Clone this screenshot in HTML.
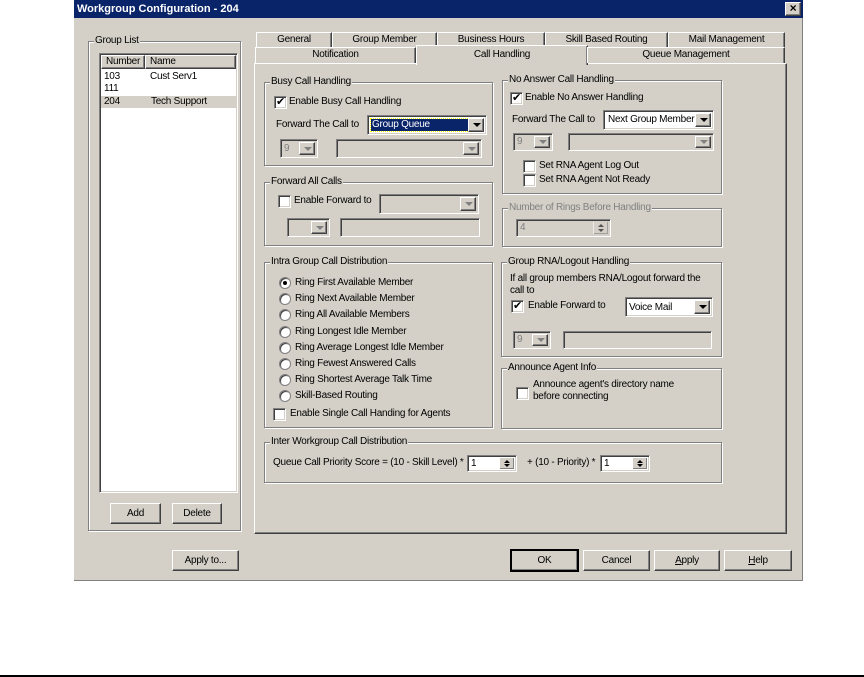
<!DOCTYPE html>
<html><head><meta charset="utf-8"><style>
*{box-sizing:border-box;margin:0;padding:0}
body{width:864px;height:677px;background:#fff;position:relative;overflow:hidden;font-family:"Liberation Sans",sans-serif;font-size:10px;letter-spacing:-0.25px;color:#000}
div,span{position:absolute}
.dlg{left:74px;top:0;width:729px;height:581px;background:#d4d0c8;border-right:1px solid #808080;border-bottom:1px solid #808080}
.title{left:74px;top:0;width:729px;height:18px;background:#0a246a;color:#fff;font-weight:bold;font-size:11px;letter-spacing:0;line-height:18px;padding-left:3px}
.fs{border:1px solid #808080;box-shadow:inset 1px 1px #fff,1px 1px #fff}
.lg{background:#d4d0c8;top:-7px;left:5px;padding:0 1px;white-space:nowrap;line-height:12px}
.t{white-space:nowrap;line-height:12px}
.sunk{background:#fff;border-top:1px solid #808080;border-left:1px solid #808080;border-bottom:1px solid #fff;border-right:1px solid #fff;box-shadow:inset 1px 1px #404040,inset -1px -1px #d4d0c8}
.dis{background:#d4d0c8}
.btn{background:#d4d0c8;border-top:1px solid #fff;border-left:1px solid #fff;border-right:1px solid #404040;border-bottom:1px solid #404040;box-shadow:inset -1px -1px #808080;text-align:center;white-space:nowrap}
.cb{width:13px;height:13px}
.rd{width:12px;height:12px;border-radius:50%;background:#fff;border:1px solid #808080;box-shadow:inset 1px 1px #404040}
.rd.on::after{content:"";position:absolute;left:3px;top:3px;width:4px;height:4px;border-radius:50%;background:#000}
.arr{right:2px;top:2px;bottom:2px;width:16px}
.arr::after{content:"";position:absolute;left:4px;top:50%;margin-top:-2px;border-left:4px solid transparent;border-right:4px solid transparent;border-top:4px solid #000}
.arr.g::after{border-top-color:#808080}
.gray{color:#808080}
.tab{background:#d4d0c8;border-top:1px solid #fff;border-left:1px solid #fff;border-right:1px solid #404040;box-shadow:inset -1px 0 #808080;text-align:center;line-height:14px;white-space:nowrap}
.chk::after{content:"✔";position:absolute;left:1px;top:-1px;font-size:11px;line-height:13px}
.spin{right:2px;top:2px;bottom:2px;width:15px;border-left:1px solid #fff;background:#d4d0c8;box-shadow:inset -1px -1px #808080}
.spin::before{content:"";position:absolute;left:4px;top:2px;border-left:3px solid transparent;border-right:3px solid transparent;border-bottom:3px solid #000}
.spin::after{content:"";position:absolute;left:4px;bottom:2px;border-left:3px solid transparent;border-right:3px solid transparent;border-top:3px solid #000}
</style></head><body>
<div class="dlg"></div>
<div class="title">Workgroup Configuration - 204</div>
<div class="btn" style="left:785px;top:2px;width:16px;height:14px;line-height:11px;font-weight:bold;font-size:12px">×</div>

<div class="fs" style="left:88px;top:41px;width:153px;height:490px"><span class="lg">Group List</span></div>
<div class="sunk" style="left:99px;top:53px;width:139px;height:440px"></div>
<div class="btn" style="left:101px;top:55px;width:44px;height:14px;line-height:12px;text-align:left;padding-left:4px">Number</div>
<div class="btn" style="left:145px;top:55px;width:91px;height:14px;line-height:12px;text-align:left;padding-left:4px">Name</div>
<div style="left:101px;top:96px;width:135px;height:12px;background:#d4d0c8"></div>
<span class="t" style="left:104px;top:71px">103</span><span class="t" style="left:150px;top:71px">Cust Serv1</span>
<span class="t" style="left:104px;top:83px">111</span>
<span class="t" style="left:104px;top:96px">204</span><span class="t" style="left:151px;top:96px">Tech Support</span>
<div class="btn" style="left:110px;top:503px;width:51px;height:21px;line-height:19px">Add</div>
<div class="btn" style="left:172px;top:503px;width:50px;height:21px;line-height:19px">Delete</div>

<div class="tab" style="left:256px;top:32px;width:76px;height:16px">General</div>
<div class="tab" style="left:332px;top:32px;width:105px;height:16px">Group Member</div>
<div class="tab" style="left:437px;top:32px;width:108px;height:16px">Business Hours</div>
<div class="tab" style="left:545px;top:32px;width:123px;height:16px">Skill Based Routing</div>
<div class="tab" style="left:668px;top:32px;width:117px;height:16px">Mail Management</div>
<div style="left:254px;top:63px;width:533px;height:471px;border-top:1px solid #fff;border-left:1px solid #fff;border-right:1px solid #404040;border-bottom:1px solid #404040;box-shadow:inset -1px -1px #808080;background:#d4d0c8"></div>
<div class="tab" style="left:255px;top:47px;width:161px;height:16px">Notification</div>
<div class="tab" style="left:416px;top:45px;width:172px;height:20px;border-bottom:none;line-height:18px">Call Handling</div>
<div class="tab" style="left:587px;top:47px;width:198px;height:16px">Queue Management</div>

<div class="fs" style="left:264px;top:82px;width:229px;height:84px"><span class="lg">Busy Call Handling</span></div>
<div class="sunk cb chk" style="left:274px;top:96px"></div><span class="t" style="left:289px;top:96px">Enable Busy Call Handling</span>
<span class="t" style="left:276px;top:119px">Forward The Call to</span>
<div class="sunk" style="left:367px;top:115px;width:120px;height:20px"><div style="left:3px;top:3px;width:100px;height:12px;background:#0a246a;outline:1px dotted #ff0"></div><span class="t" style="left:4px;top:3px;color:#fff">Group Queue</span><div class="btn arr"></div></div>
<div class="sunk dis" style="left:280px;top:139px;width:38px;height:19px"><span class="t gray" style="left:3px;top:3px">9</span><div class="btn arr g"></div></div>
<div class="sunk dis" style="left:336px;top:139px;width:146px;height:19px"><div class="btn arr g"></div></div>

<div class="fs" style="left:264px;top:182px;width:229px;height:64px"><span class="lg">Forward All Calls</span></div>
<div class="sunk cb" style="left:278px;top:195px"></div><span class="t" style="left:294px;top:195px">Enable Forward to</span>
<div class="sunk dis" style="left:379px;top:194px;width:100px;height:20px"><div class="btn arr g"></div></div>
<div class="sunk dis" style="left:287px;top:218px;width:43px;height:19px"><div class="btn arr g"></div></div>
<div class="sunk dis" style="left:340px;top:218px;width:140px;height:19px"></div>

<div class="fs" style="left:264px;top:262px;width:229px;height:166px"><span class="lg">Intra Group Call Distribution</span></div>
<div class="rd on" style="left:279px;top:277px"></div><span class="t" style="left:295px;top:277px">Ring First Available Member</span>
<div class="rd" style="left:279px;top:293px"></div><span class="t" style="left:295px;top:293px">Ring Next Available Member</span>
<div class="rd" style="left:279px;top:309px"></div><span class="t" style="left:295px;top:309px">Ring All Available Members</span>
<div class="rd" style="left:279px;top:326px"></div><span class="t" style="left:295px;top:326px">Ring Longest Idle Member</span>
<div class="rd" style="left:279px;top:342px"></div><span class="t" style="left:295px;top:342px">Ring Average Longest Idle Member</span>
<div class="rd" style="left:279px;top:358px"></div><span class="t" style="left:295px;top:358px">Ring Fewest Answered Calls</span>
<div class="rd" style="left:279px;top:374px"></div><span class="t" style="left:295px;top:374px">Ring Shortest Average Talk Time</span>
<div class="rd" style="left:279px;top:390px"></div><span class="t" style="left:295px;top:390px">Skill-Based Routing</span>
<div class="sunk cb" style="left:273px;top:408px"></div><span class="t" style="left:290px;top:408px">Enable Single Call Handing for Agents</span>

<div class="fs" style="left:264px;top:442px;width:458px;height:41px"><span class="lg">Inter Workgroup Call Distribution</span></div>
<span class="t" style="left:273px;top:457px">Queue Call Priority Score = (10 - Skill Level) *</span>
<div class="sunk" style="left:467px;top:455px;width:50px;height:17px"><span class="t" style="left:3px;top:2px">1</span><div class="spin"></div></div>
<span class="t" style="left:527px;top:457px">+ (10 - Priority) *</span>
<div class="sunk" style="left:600px;top:455px;width:50px;height:17px"><span class="t" style="left:3px;top:2px">1</span><div class="spin"></div></div>

<div class="fs" style="left:502px;top:80px;width:220px;height:114px"><span class="lg">No Answer Call Handling</span></div>
<div class="sunk cb chk" style="left:510px;top:92px"></div><span class="t" style="left:525px;top:92px">Enable No Answer Handling</span>
<span class="t" style="left:512px;top:114px">Forward The Call to</span>
<div class="sunk" style="left:603px;top:110px;width:111px;height:20px"><span class="t" style="left:4px;top:3px">Next Group Member</span><div class="btn arr"></div></div>
<div class="sunk dis" style="left:513px;top:133px;width:40px;height:18px"><span class="t gray" style="left:3px;top:2px">9</span><div class="btn arr g"></div></div>
<div class="sunk dis" style="left:568px;top:133px;width:146px;height:18px"><div class="btn arr g"></div></div>
<div class="sunk cb" style="left:523px;top:160px"></div><span class="t" style="left:539px;top:160px">Set RNA Agent Log Out</span>
<div class="sunk cb" style="left:523px;top:174px"></div><span class="t" style="left:539px;top:174px">Set RNA Agent Not Ready</span>

<div class="fs" style="left:502px;top:208px;width:220px;height:39px"><span class="lg gray">Number of Rings Before Handling</span></div>
<div class="sunk dis" style="left:516px;top:219px;width:95px;height:18px"><span class="t gray" style="left:3px;top:2px">4</span><div class="spin" style="opacity:.6"></div></div>

<div class="fs" style="left:501px;top:262px;width:221px;height:95px"><span class="lg">Group RNA/Logout Handling</span></div>
<span class="t" style="left:510px;top:273px">If all group members RNA/Logout forward the</span>
<span class="t" style="left:510px;top:285px">call to</span>
<div class="sunk cb chk" style="left:511px;top:300px"></div><span class="t" style="left:528px;top:300px">Enable Forward to</span>
<div class="sunk" style="left:625px;top:297px;width:88px;height:20px"><span class="t" style="left:3px;top:4px">Voice Mail</span><div class="btn arr"></div></div>
<div class="sunk dis" style="left:513px;top:331px;width:38px;height:18px"><span class="t gray" style="left:3px;top:2px">9</span><div class="btn arr g"></div></div>
<div class="sunk dis" style="left:563px;top:331px;width:149px;height:18px"></div>

<div class="fs" style="left:501px;top:368px;width:221px;height:61px"><span class="lg">Announce Agent Info</span></div>
<div class="sunk cb" style="left:516px;top:387px"></div>
<span class="t" style="left:533px;top:379px">Announce agent's directory name</span>
<span class="t" style="left:533px;top:391px">before connecting</span>

<div class="btn" style="left:172px;top:550px;width:67px;height:21px;line-height:19px">Apply to...</div>
<div class="btn" style="left:510px;top:549px;width:69px;height:23px;line-height:19px;border:2px solid #000">OK</div>
<div class="btn" style="left:583px;top:550px;width:67px;height:21px;line-height:19px">Cancel</div>
<div class="btn" style="left:654px;top:550px;width:66px;height:21px;line-height:19px"><u>A</u>pply</div>
<div class="btn" style="left:724px;top:550px;width:68px;height:21px;line-height:19px"><u>H</u>elp</div>

<div style="left:0;top:675px;width:864px;height:2px;background:#000"></div>
</body></html>
